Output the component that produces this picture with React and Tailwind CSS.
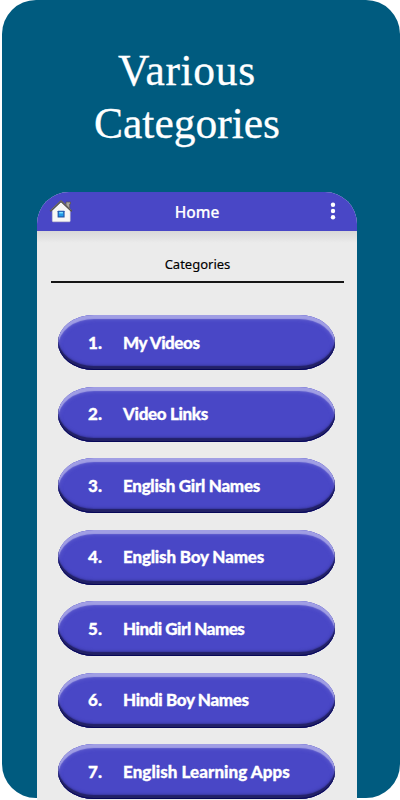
const categories = [
  { label: "My Videos", spacing: "tracking-[-0.45px]" },
  { label: "Video Links", spacing: "tracking-[-0.35px]" },
  { label: "English Girl Names", spacing: "tracking-[-0.3px]" },
  { label: "English Boy Names", spacing: "tracking-[-0.18px]" },
  { label: "Hindi Girl Names", spacing: "tracking-[-0.5px]" },
  { label: "Hindi Boy Names", spacing: "tracking-[-0.37px]" },
  { label: "English Learning Apps", spacing: "tracking-[0.04px]" },
];

function HouseIcon() {
  return (
    <svg width="24" height="24" viewBox="0 0 24 24" className="mb-px shrink-0">
      <path d="M17 3h4.500v2h-.8v6.500l-3.700-3.500z" fill="#aaa59d" stroke="#57534e" strokeWidth=".7" />
      <path d="M3.300 11.500 12 3l9.200 8.500V22q0 .8-.8.800H4.100q-.8 0-.8-.8z" fill="#f7f7f5" stroke="#c9c6c6" strokeWidth=".5" />
      <path d="M1.600 11.800 12 2.200l10.400 9.600" fill="none" stroke="#55514d" strokeWidth="1.600" strokeLinejoin="round" strokeLinecap="round" />
      <path d="M1.600 11.200 12 1.600l10.400 9.600" fill="none" stroke="#8b867d" strokeWidth=".6" />
      <rect x="8.600" y="11.800" width="7" height="6.800" rx=".4" fill="#2557aa" />
      <rect x="9.800" y="12.900" width="4.600" height="4.400" fill="#1f9be8" />
      <rect x="10.300" y="12.900" width="3.600" height="1.500" fill="#7fe0ff" />
    </svg>
  );
}

function CategoryButton({ number, label, spacing }) {
  return (
    <button className="flex h-[55px] w-[277px] shrink-0 items-center rounded-[36px/27.5px] bg-[#4947c6] text-left font-['Lato','Liberation_Sans',sans-serif] text-[17px] font-black text-white shadow-[inset_0_-1px_0_#070758,inset_0_-4px_1px_#222166,inset_0_4px_1px_#a09ee4,inset_0_4px_4px_#6967d2,inset_0_-5px_3px_#3b39a5] [-webkit-text-stroke:0.3px_white]">
      <span className="w-[44px] text-right">{number}.</span>
      <span className={`ml-[21px] whitespace-nowrap ${spacing}`}>{label}</span>
    </button>
  );
}

export default function App() {
  return (
    <div className="h-[800px] w-[400px] overflow-hidden bg-white pl-[2px]">
      <div className="h-[798px] w-[398px] rounded-[34px] bg-[#005b7f]">
        <h1 className="flex h-[192px] w-[370px] flex-col items-center pt-[44px] text-center font-['Liberation_Serif',serif] text-[43.500px] leading-[53px] text-white [-webkit-text-stroke:0.3px_white]">
          <span className="tracking-[0.7px]">Various</span>
          <span>Categories</span>
        </h1>
        <main className="ml-[35px] h-[608px] w-[320px] overflow-hidden rounded-t-[32px] bg-[#ebebeb] font-['Noto_Sans',sans-serif]">
          <header className="flex h-[39px] items-center bg-[#4947c6] pl-[12px] pr-[20px] text-white">
            <HouseIcon />
            <span className="flex-1 pr-[8px] pt-[2px] text-center text-[15.500px] font-medium [-webkit-text-stroke:0.2px_white]">Home</span>
            <svg width="8" height="18" viewBox="0 0 8 18" fill="white" className="mb-px">
              <circle cx="4" cy="2.800" r="2.200" />
              <circle cx="4" cy="9" r="2.200" />
              <circle cx="4" cy="15.200" r="2.200" />
            </svg>
          </header>
          <div className="h-[12px] bg-linear-to-b from-[#d8d8d8] to-[#ebebeb]" />
          <h2 className="ml-[14px] mr-[13px] flex h-[40px] items-center justify-center border-b-2 border-[#151515] pt-[6px] text-[13px] font-normal text-black [-webkit-text-stroke:0.15px_black]">Categories</h2>
          <div className="flex flex-col gap-[16.500px] pl-[21px] pt-[32px]">
            {categories.map((item, index) => (
              <CategoryButton key={item.label} number={index + 1} label={item.label} spacing={item.spacing} />
            ))}
          </div>
        </main>
      </div>
    </div>
  );
}
